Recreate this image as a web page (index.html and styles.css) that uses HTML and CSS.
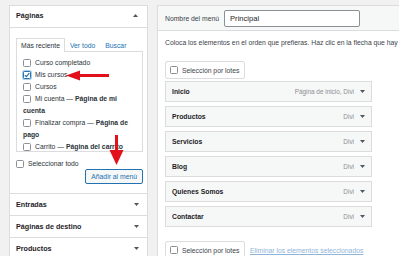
FILE: index.html
```html
<!DOCTYPE html>
<html>
<head>
<meta charset="utf-8">
<link rel="stylesheet" href="styles.css">
</head>
<body>

<div class="screen">
 <div class="sidebar">
  <div class="box-head">
   <span>Páginas</span>
   <svg class="caret" width="5" height="3" viewBox="0 0 5 3"><polygon points="0,3 5,3 2.5,0"/></svg>
  </div>
  <div class="box-body">
   <ul class="tabs">
    <li class="active">Más reciente</li>
    <li><a href="#">Ver todo</a></li>
    <li><a href="#">Buscar</a></li>
   </ul>
   <ul class="checklist">
    <li><label><span class="cb"></span>Curso completado</label></li>
    <li><label><span class="cb checked"><svg width="6" height="6" viewBox="0 0 6 6"><path d="M0.8 3.2 L2.4 4.7 L5.3 1.1"/></svg></span>Mis cursos</label></li>
    <li><label><span class="cb"></span>Cursos</label></li>
    <li><label><span class="cb"></span>Mi cuenta — <strong>Página de mi cuenta</strong></label></li>
    <li><label><span class="cb"></span>Finalizar compra — <strong>Página de pago</strong></label></li>
    <li><label><span class="cb"></span>Carrito — <strong>Página del carrito</strong></label></li>
   </ul>
   <div class="box-actions">
    <label class="select-all"><span class="cb"></span>Seleccionar todo</label>
    <button class="btn">Añadir al menú</button>
   </div>
  </div>
  <div class="acc-head">
   <span>Entradas</span>
   <svg class="caret" width="5" height="3" viewBox="0 0 5 3"><polygon points="0,0 5,0 2.5,3"/></svg>
  </div>
  <div class="acc-head">
   <span>Páginas de destino</span>
   <svg class="caret" width="5" height="3" viewBox="0 0 5 3"><polygon points="0,0 5,0 2.5,3"/></svg>
  </div>
  <div class="acc-head">
   <span>Productos</span>
   <svg class="caret" width="5" height="3" viewBox="0 0 5 3"><polygon points="0,0 5,0 2.5,3"/></svg>
  </div>
 </div>

 <div class="editor">
  <div class="menu-head">
   <label for="menu-name">Nombre del menú</label>
   <input type="text" id="menu-name" class="name-input" value="Principal">
  </div>
  <div class="menu-body">
   <p class="hint">Coloca los elementos en el orden que prefieras. Haz clic en la flecha que hay</p>
   <div class="bulk"><span class="cb"></span>Selección por lotes</div>

   <ul class="menu-list">
    <li class="menu-item"><span class="item-title">Inicio</span><span class="item-meta">Página de inicio, Divi</span><svg class="caret" width="5" height="3" viewBox="0 0 5 3"><polygon points="0,0 5,0 2.5,3"/></svg></li>
    <li class="menu-item"><span class="item-title">Productos</span><span class="item-meta">Divi</span><svg class="caret" width="5" height="3" viewBox="0 0 5 3"><polygon points="0,0 5,0 2.5,3"/></svg></li>
    <li class="menu-item"><span class="item-title">Servicios</span><span class="item-meta">Divi</span><svg class="caret" width="5" height="3" viewBox="0 0 5 3"><polygon points="0,0 5,0 2.5,3"/></svg></li>
    <li class="menu-item"><span class="item-title">Blog</span><span class="item-meta">Divi</span><svg class="caret" width="5" height="3" viewBox="0 0 5 3"><polygon points="0,0 5,0 2.5,3"/></svg></li>
    <li class="menu-item"><span class="item-title">Quienes Somos</span><span class="item-meta">Divi</span><svg class="caret" width="5" height="3" viewBox="0 0 5 3"><polygon points="0,0 5,0 2.5,3"/></svg></li>
    <li class="menu-item"><span class="item-title">Contactar</span><span class="item-meta">Divi</span><svg class="caret" width="5" height="3" viewBox="0 0 5 3"><polygon points="0,0 5,0 2.5,3"/></svg></li>
   </ul>

   <div class="bulk-row">
    <div class="bulk"><span class="cb"></span>Selección por lotes</div>
    <a href="#" class="delete-link">Eliminar los elementos seleccionados</a>
   </div>
  </div>
 </div>

 <!-- red arrows drawn over the screenshot -->
 <svg class="arrow arrow-left" width="48" height="13" viewBox="0 0 48 13">
  <polygon points="2,6.5 16,1.5 16,11.5"/>
  <rect x="15" y="5" width="30" height="3"/>
 </svg>
 <svg class="arrow arrow-down" width="17" height="32" viewBox="0 0 17 32">
  <rect x="7" y="0" width="3" height="17"/>
  <polygon points="1.5,15 15.5,15 8.5,30"/>
 </svg>
</div>

</body>
</html>
```

FILE: styles.css
```css
body {
    margin: 0;
    background: #f1f1f1;
    font-family: "Liberation Sans", Arial, sans-serif;
    font-size: 6.8px;
    color: #2c3338;
}

ul {
    list-style: none;
    margin: 0;
    padding: 0;
}

a {
    color: #2271b1;
    text-decoration: none;
}

.screen {
    position: relative;
    display: flex;
    gap: 9px;
    height: 256px;
    padding: 5px 0 0 9px;
    box-sizing: border-box;
    overflow: hidden;
}

/* left column */
.sidebar {
    flex: none;
    width: 139px;
    background: #fff;
    border: 1px solid #dcdcde;
    border-bottom: 0;
    box-sizing: border-box;
}

.box-head {
    display: flex;
    align-items: center;
    justify-content: space-between;
    height: 22px;
    padding: 0 9px 3px 6px;
    box-sizing: border-box;
    border-bottom: 1px solid #dcdcde;
    font-size: 7.2px;
    font-weight: bold;
    color: #1d2327;
}

.caret {
    flex: none;
    fill: #50575e;
}

.box-body {
    padding: 10px 4px 9px 6px;
}

.tabs {
    display: flex;
    height: 13px;
}

.tabs li {
    padding: 0 4px;
    line-height: 13px;
    border: 1px solid transparent;
    border-bottom: 0;
}

.tabs li.active {
    position: relative;
    margin-bottom: -1px;
    background: #fff;
    border-color: #dcdcde;
    color: #2c3338;
}

.checklist {
    height: 101px;
    padding: 5px 6px;
    box-sizing: border-box;
    border: 1px solid #dcdcde;
    overflow: hidden;
    line-height: 12px;
}

.cb {
    display: inline-block;
    width: 8px;
    height: 8px;
    margin-right: 4px;
    vertical-align: -1.5px;
    box-sizing: border-box;
    border: 1px solid #8c8f94;
    border-radius: 1.5px;
    background: #fff;
}

.cb.checked {
    border-color: #2271b1;
    box-shadow: 0 0 0 1px rgba(34, 113, 177, 0.35);
}

.cb svg {
    display: block;
    fill: none;
    stroke: #2271b1;
    stroke-width: 1.2;
}

.checklist strong {
    font-weight: bold;
    color: #2c3338;
}

.box-actions {
    display: flex;
    justify-content: space-between;
    height: 26px;
    margin-top: 6px;
}

.select-all {
    align-self: flex-start;
    line-height: 12px;
}

.btn {
    align-self: flex-end;
    height: 15px;
    padding: 0 5px;
    border: 1px solid #2271b1;
    border-radius: 2px;
    background: #f6f7f7;
    color: #2271b1;
    font-family: inherit;
    font-size: 6.8px;
}

.acc-head {
    display: flex;
    align-items: center;
    justify-content: space-between;
    height: 22px;
    padding: 0 8px 0 6px;
    box-sizing: border-box;
    border-top: 1px solid #dcdcde;
    font-size: 7.2px;
    font-weight: bold;
    color: #1d2327;
}

/* right column */
.editor {
    flex: 1;
    min-width: 0;
    background: #fff;
    border: 1px solid #dcdcde;
    border-right: 0;
    border-bottom: 0;
}

.menu-head {
    display: flex;
    align-items: center;
    height: 25px;
    padding: 0 7px;
    box-sizing: border-box;
    background: #f6f7f7;
    border-bottom: 1px solid #dcdcde;
    color: #3c434a;
}

.name-input {
    width: 136px;
    height: 17px;
    margin-left: 5px;
    padding: 0 5px;
    box-sizing: border-box;
    border: 1px solid #8c8f94;
    border-radius: 2px;
    font-family: inherit;
    font-size: 7.6px;
    color: #1d2327;
}

.menu-body {
    padding: 0 7px;
}

.hint {
    margin: 7px 0 0;
    line-height: 10px;
    white-space: nowrap;
    color: #3c434a;
}

.bulk {
    display: flex;
    align-items: center;
    width: 80px;
    height: 18px;
    margin-top: 13px;
    padding-left: 4px;
    box-sizing: border-box;
    border: 1px solid #dcdcde;
    border-radius: 2px;
    color: #3c434a;
}

.menu-list {
    width: 207px;
    margin-top: 2px;
}

.menu-item {
    display: flex;
    align-items: center;
    height: 21px;
    margin-bottom: 4px;
    padding: 0 6px;
    box-sizing: border-box;
    border: 1px solid #dcdcde;
    background: #f6f7f7;
}

.item-title {
    flex: 1;
    font-weight: bold;
    color: #1d2327;
}

.item-meta {
    margin-right: 6px;
    color: #8c8f94;
    font-size: 6.4px;
}

.bulk-row {
    display: flex;
    align-items: center;
    gap: 5px;
    margin-top: 14px;
}

.bulk-row .bulk {
    margin-top: 0;
}

.delete-link {
    color: #8fb4d8;
    text-decoration: underline;
}

.arrow {
    position: absolute;
    fill: #e2101b;
}

.arrow-left {
    left: 64px;
    top: 69px;
}

.arrow-down {
    left: 108px;
    top: 135px;
}
```
